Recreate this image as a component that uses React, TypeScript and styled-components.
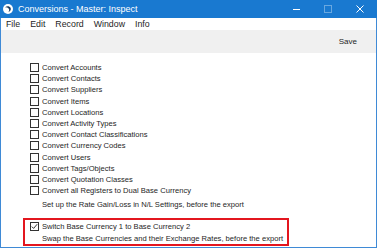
import React from "react";
import styled, { createGlobalStyle } from "styled-components";

const GlobalStyle = createGlobalStyle`
  html, body {
    margin: 0;
    padding: 0;
    background: #ffffff;
  }
  body {
    font-family: "Liberation Sans", Arial, sans-serif;
    color: #1e1e1e;
  }
`;

const Window = styled.div`
  width: 377px;
  height: 248px;
  display: flex;
  flex-direction: column;
  overflow: hidden;
`;

const TitleBar = styled.div`
  height: 18px;
  flex: none;
  display: flex;
  align-items: center;
  padding-left: 3px;
  background: #1979d0;
  color: #ffffff;
  font-size: 9px;
`;

const TitleText = styled.span`
  margin-left: 5px;
`;

const Controls = styled.div`
  margin-left: auto;
  display: flex;
  height: 100%;
  padding-right: 1px;
`;

const ControlButton = styled.div<{ $faded?: boolean }>`
  width: 32px;
  height: 100%;
  display: flex;
  align-items: center;
  justify-content: center;
  opacity: ${(p) => (p.$faded ? 0.35 : 1)};
`;

const Frame = styled.div`
  flex: 1;
  display: flex;
  flex-direction: column;
  border: 1px solid #3f8ad6;
  border-top: none;
  background: #ffffff;
`;

const MenuBar = styled.div`
  height: 12px;
  flex: none;
  display: flex;
  align-items: center;
  font-size: 8.8px;
`;

const MenuItem = styled.span`
  padding: 0 5px;
`;

const Toolbar = styled.div`
  height: 23px;
  flex: none;
  display: flex;
  align-items: center;
  justify-content: flex-end;
  padding-right: 19px;
  background: #f0f0f0;
  font-size: 8px;
`;

const Content = styled.div`
  display: flex;
  flex-direction: column;
  padding: 9px 0 0 29px;
  font-size: 7.6px;
`;

const CheckRow = styled.div`
  height: 11.2px;
  display: flex;
  align-items: center;
  white-space: nowrap;
`;

const Box = styled.span`
  width: 9px;
  height: 9px;
  box-sizing: border-box;
  border: 1px solid #333333;
  background: #ffffff;
  flex: none;
  display: flex;
  align-items: center;
  justify-content: center;
`;

const Label = styled.span`
  margin-left: 3px;
`;

const Note = styled.div<{ $gap?: number }>`
  height: 11.2px;
  line-height: 11.2px;
  padding-left: 12px;
  margin-top: ${(p) => p.$gap ?? 0}px;
  white-space: nowrap;
`;

const Highlight = styled.div`
  margin: 7.4px 0 0 -7px;
  width: 266px;
  height: 28px;
  box-sizing: border-box;
  border: 2px solid #e3161f;
  padding: 1px 0 0 5px;
  display: flex;
  flex-direction: column;
`;

const items = [
  "Convert Accounts",
  "Convert Contacts",
  "Convert Suppliers",
  "Convert Items",
  "Convert Locations",
  "Convert Activity Types",
  "Convert Contact Classifications",
  "Convert Currency Codes",
  "Convert Users",
  "Convert Tags/Objects",
  "Convert Quotation Classes",
  "Convert all Registers to Dual Base Currency",
];

const AppIcon = () => (
  <svg width="10" height="10" viewBox="0 0 10 10">
    <circle cx="5" cy="5" r="5" fill="#ffffff" />
    <path d="M2.2 3.2 C3.6 1.6 6.6 1.8 7.6 3.8 C8.4 5.6 7.2 7.8 5 8.2 C6.4 7.2 6.6 5.4 5.6 4.4 C4.6 3.4 3.2 3.4 2.2 3.2 Z" fill="#1b3b5e" />
  </svg>
);

const Check = () => (
  <svg width="7" height="7" viewBox="0 0 7 7">
    <polyline points="0.8,3.6 2.6,5.4 6.2,1.2" fill="none" stroke="#333" strokeWidth="1" />
  </svg>
);

const App: React.FC = () => {
  return (
    <>
      <GlobalStyle />
      <Window>
        <TitleBar>
          <AppIcon />
          <TitleText>Conversions - Master: Inspect</TitleText>
          <Controls>
            <ControlButton>
              <svg width="7" height="7" viewBox="0 0 7 7">
                <line x1="0" y1="3.5" x2="7" y2="3.5" stroke="#fff" strokeWidth="1" />
              </svg>
            </ControlButton>
            <ControlButton $faded>
              <svg width="8" height="8" viewBox="0 0 8 8">
                <rect x="0.5" y="0.5" width="7" height="7" fill="none" stroke="#fff" strokeWidth="1" />
              </svg>
            </ControlButton>
            <ControlButton>
              <svg width="8" height="8" viewBox="0 0 8 8">
                <path d="M0.5 0.5 L7.5 7.5 M7.5 0.5 L0.5 7.5" stroke="#fff" strokeWidth="1" />
              </svg>
            </ControlButton>
          </Controls>
        </TitleBar>
        <Frame>
          <MenuBar>
            <MenuItem>File</MenuItem>
            <MenuItem>Edit</MenuItem>
            <MenuItem>Record</MenuItem>
            <MenuItem>Window</MenuItem>
            <MenuItem>Info</MenuItem>
          </MenuBar>
          <Toolbar>Save</Toolbar>
          <Content>
            {items.map((item) => (
              <CheckRow key={item}>
                <Box />
                <Label>{item}</Label>
              </CheckRow>
            ))}
            <Note $gap={3.2}>Set up the Rate Gain/Loss in N/L Settings, before the export</Note>
            <Highlight>
              <CheckRow>
                <Box>
                  <Check />
                </Box>
                <Label>Switch Base Currency 1 to Base Currency 2</Label>
              </CheckRow>
              <Note $gap={1.5}>Swap the Base Currencies and their Exchange Rates, before the export</Note>
            </Highlight>
          </Content>
        </Frame>
      </Window>
    </>
  );
};

export default App;
